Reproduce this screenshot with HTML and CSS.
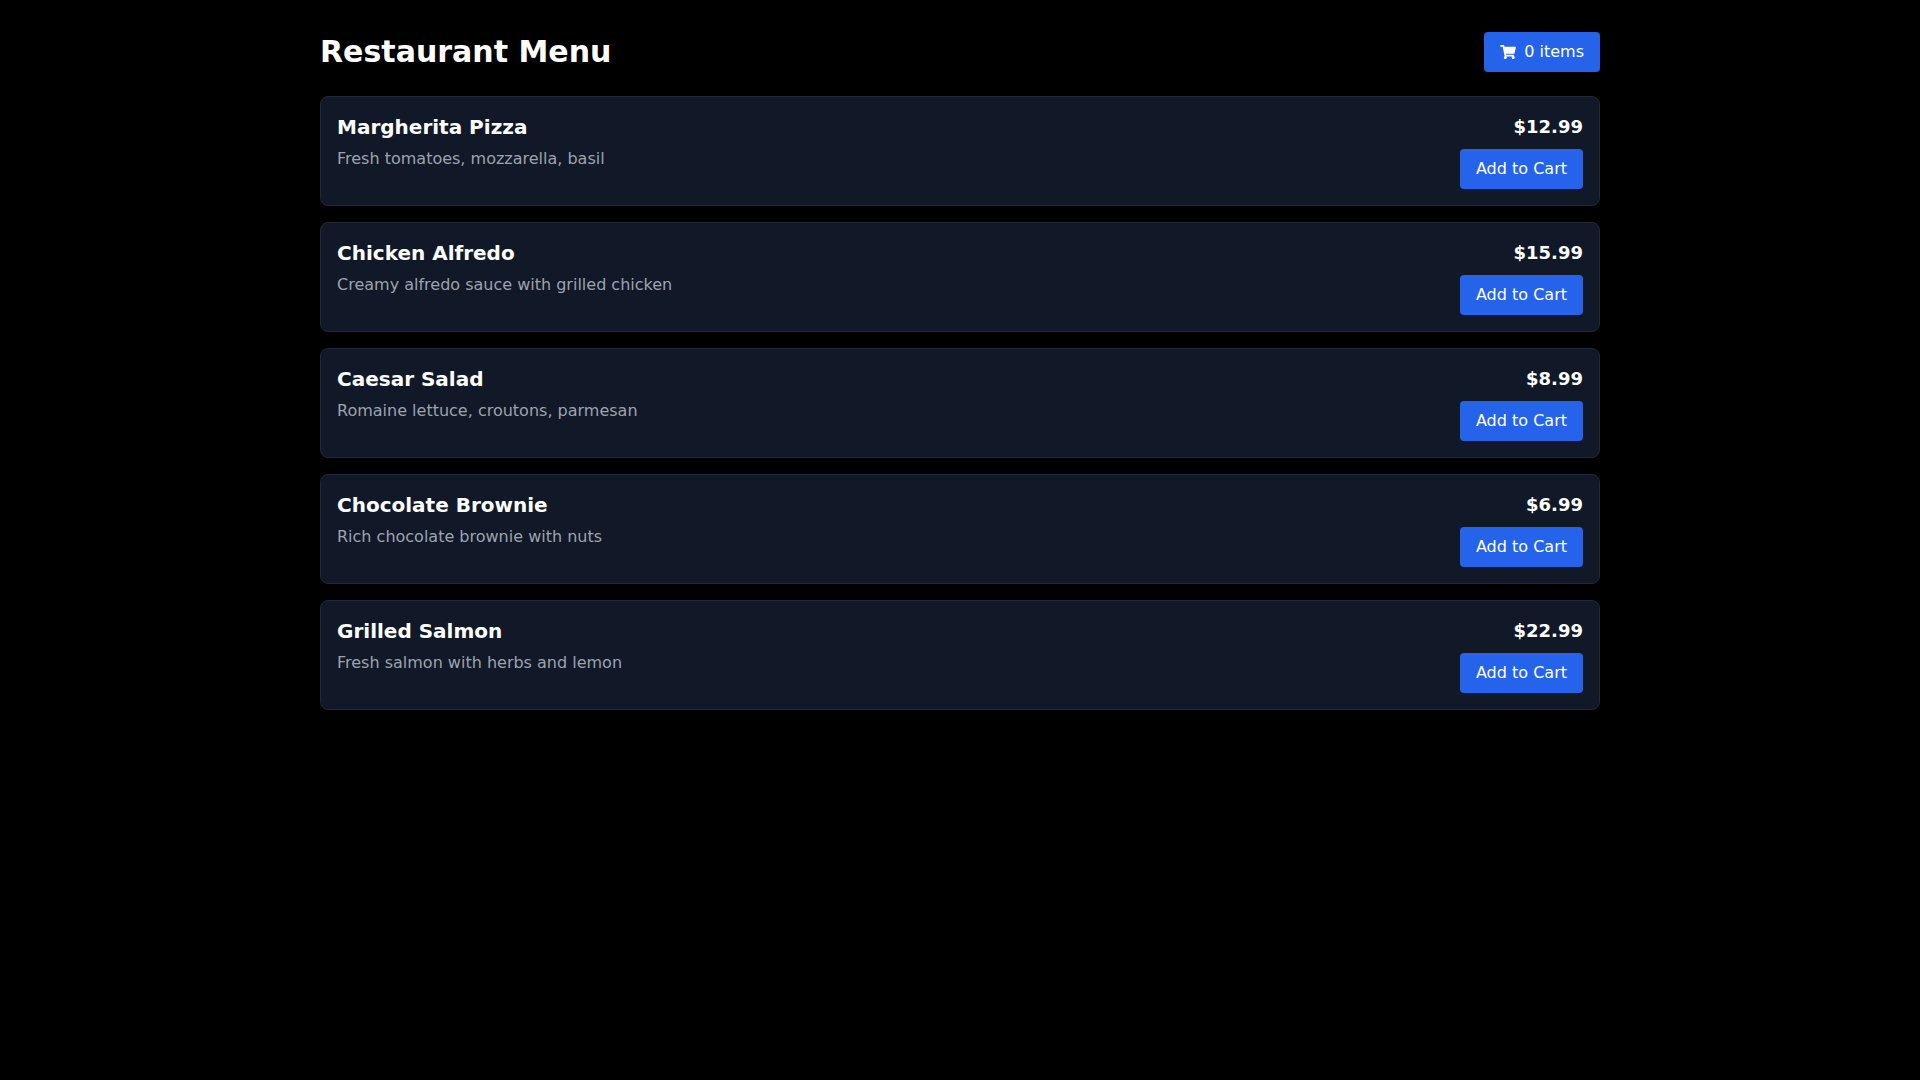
FILE: index.html
```html
<!DOCTYPE html>
<html lang="en">
<head>
    <meta charset="UTF-8">
    <meta name="viewport" content="width=device-width, initial-scale=1.0">
    <title>Restaurant Menu</title>
    <link rel="stylesheet" href="styles.css">
</head>
<body>
    <div class="container">
        <header class="header">
            <h1>Restaurant Menu</h1>
            <button type="button" class="btn cart-btn">
                <svg class="cart-icon" viewBox="0 0 576 512" aria-hidden="true"><path fill="currentColor" d="M528.12 301.319l47.273-208C578.806 78.301 567.391 64 551.99 64H159.208l-9.166-44.81C147.758 8.021 137.93 0 126.529 0H24C10.745 0 0 10.745 0 24v16c0 13.255 10.745 24 24 24h69.883l70.248 343.435C147.325 417.1 136 435.222 136 456c0 30.928 25.072 56 56 56s56-25.072 56-56c0-15.674-6.447-29.835-16.824-40h209.647C430.447 426.165 424 440.326 424 456c0 30.928 25.072 56 56 56s56-25.072 56-56c0-22.172-12.888-41.332-31.579-50.405l5.517-24.276c3.413-15.018-8.002-29.319-23.403-29.319H218.117l-6.545-32h293.145c11.206 0 20.92-7.754 23.403-18.681z"/></svg>
                <span>0 items</span>
            </button>
        </header>

        <div class="menu-list">
            <div class="menu-item">
                <div class="item-info">
                    <h3>Margherita Pizza</h3>
                    <p>Fresh tomatoes, mozzarella, basil</p>
                </div>
                <div class="item-side">
                    <span class="price">$12.99</span>
                    <button type="button" class="btn">Add to Cart</button>
                </div>
            </div>
            <div class="menu-item">
                <div class="item-info">
                    <h3>Chicken Alfredo</h3>
                    <p>Creamy alfredo sauce with grilled chicken</p>
                </div>
                <div class="item-side">
                    <span class="price">$15.99</span>
                    <button type="button" class="btn">Add to Cart</button>
                </div>
            </div>
            <div class="menu-item">
                <div class="item-info">
                    <h3>Caesar Salad</h3>
                    <p>Romaine lettuce, croutons, parmesan</p>
                </div>
                <div class="item-side">
                    <span class="price">$8.99</span>
                    <button type="button" class="btn">Add to Cart</button>
                </div>
            </div>
            <div class="menu-item">
                <div class="item-info">
                    <h3>Chocolate Brownie</h3>
                    <p>Rich chocolate brownie with nuts</p>
                </div>
                <div class="item-side">
                    <span class="price">$6.99</span>
                    <button type="button" class="btn">Add to Cart</button>
                </div>
            </div>
            <div class="menu-item">
                <div class="item-info">
                    <h3>Grilled Salmon</h3>
                    <p>Fresh salmon with herbs and lemon</p>
                </div>
                <div class="item-side">
                    <span class="price">$22.99</span>
                    <button type="button" class="btn">Add to Cart</button>
                </div>
            </div>
        </div>
    </div>
</body>
</html>
```

FILE: styles.css
```css
* {
    box-sizing: border-box;
}

body {
    margin: 0;
    background-color: #000;
    color: #fff;
    font-family: "DejaVu Sans", sans-serif;
    font-size: 16px;
    line-height: 24px;
}

.container {
    width: 1280px;
    margin: 0 auto;
    padding-top: 32px;
}

.header {
    display: flex;
    justify-content: space-between;
    align-items: center;
    margin-bottom: 24px;
}

h1 {
    margin: 0;
    font-size: 30px;
    line-height: 36px;
    font-weight: 700;
}

.btn {
    height: 40px;
    padding: 0 16px;
    background-color: #2563eb;
    color: #fff;
    border: none;
    border-radius: 4px;
    font-family: inherit;
    font-size: 16px;
    line-height: 24px;
    cursor: pointer;
}

.cart-btn {
    display: flex;
    align-items: center;
    gap: 8px;
}

.cart-icon {
    width: 16px;
    height: 14px;
}

.menu-list {
    display: flex;
    flex-direction: column;
    gap: 16px;
}

.menu-item {
    display: flex;
    justify-content: space-between;
    padding: 16px;
    background-color: #111827;
    border: 1px solid #1f2937;
    border-radius: 8px;
}

h3 {
    margin: 0 0 6px;
    font-size: 20px;
    line-height: 28px;
    font-weight: 700;
}

.item-info p {
    margin: 0;
    color: #9ca3af;
}

.item-side {
    display: flex;
    flex-direction: column;
    align-items: flex-end;
    gap: 8px;
}

.price {
    font-size: 18px;
    line-height: 28px;
    font-weight: 700;
}
```
